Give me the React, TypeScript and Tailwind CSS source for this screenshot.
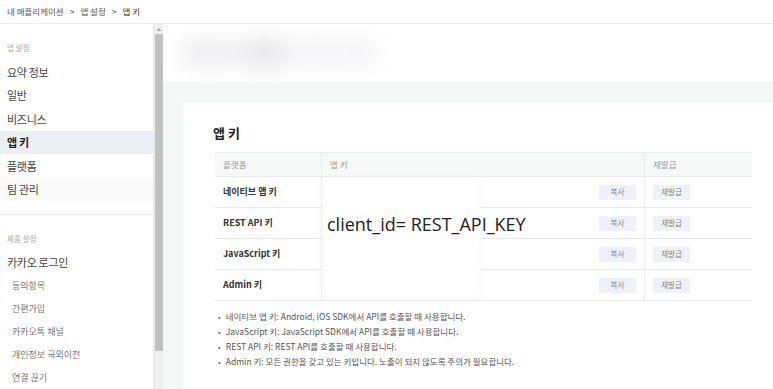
import React from "react";

const font = { fontFamily: '"Noto Sans CJK KR", "Noto Sans", sans-serif' };

function SideItem({ label, active, hover }: { label: string; active?: boolean; hover?: boolean }) {
  return (
    <div
      className={`h-[23.5px] flex items-center pl-[7px] text-[11px] tracking-[-0.3px] ${
        active ? "bg-[#eceef5] font-bold text-[#222]" : hover ? "bg-[#fafafa] text-[#444]" : "text-[#444]"
      }`}
    >
      {label}
    </div>
  );
}

function SubItem({ label }: { label: string }) {
  return <div className="h-[23px] flex items-center pl-[12px] text-[9px] text-[#777]">{label}</div>;
}

function Btn({ label }: { label: string }) {
  return (
    <div className="w-[37px] h-[15px] bg-[#f0f1f6] text-[#888] text-[7.5px] flex items-center justify-center">
      {label}
    </div>
  );
}

const rows = ["네이티브 앱 키", "REST API 키", "JavaScript 키", "Admin 키"];

const notes = [
  "네이티브 앱 키: Android, iOS SDK에서 API를 호출할 때 사용합니다.",
  "JavaScript 키: JavaScript SDK에서 API를 호출할 때 사용합니다.",
  "REST API 키: REST API를 호출할 때 사용합니다.",
  "Admin 키: 모든 권한을 갖고 있는 키입니다. 노출이 되지 않도록 주의가 필요합니다.",
];

export default function App() {
  return (
    <div className="w-[773px] h-[389px] overflow-hidden flex flex-col bg-white" style={font}>
      <div className="h-[24px] shrink-0 border-b border-[#ececec] flex items-center pl-[7px] text-[8.5px] text-[#555] gap-[6px]">
        <span>내 애플리케이션</span>
        <span>&gt;</span>
        <span>앱 설정</span>
        <span>&gt;</span>
        <span className="text-[#333]">앱 키</span>
      </div>
      <div className="flex flex-1 min-h-0">
        <div className="w-[153px] shrink-0 flex flex-col">
          <div className="h-[36px] pt-[12px] flex items-center pl-[7px] text-[7.5px] text-[#aaa]">앱 설정</div>
          <SideItem label="요약 정보" />
          <SideItem label="일반" />
          <SideItem label="비즈니스" />
          <SideItem label="앱 키" active />
          <SideItem label="플랫폼" />
          <SideItem label="팀 관리" hover />
          <div className="mt-[13px] border-t border-[#ececec]" />
          <div className="h-[36px] pt-[12px] flex items-center pl-[7px] text-[7.5px] text-[#aaa]">제품 설정</div>
          <div className="h-[23px] flex items-center pl-[7px] text-[11px] tracking-[-0.3px] text-[#444]">카카오 로그인</div>
          <SubItem label="동의항목" />
          <SubItem label="간편가입" />
          <SubItem label="카카오톡 채널" />
          <SubItem label="개인정보 국외이전" />
          <SubItem label="연결 끊기" />
        </div>
        <div className="w-[10px] shrink-0 bg-[#efefef] border-l border-[#e6e6e6] flex flex-col items-center">
          <div className="h-[10px] flex items-center justify-center">
            <div className="w-0 h-0 border-l-[2.5px] border-r-[2.5px] border-b-[3px] border-l-transparent border-r-transparent border-b-[#a3a3a3]" />
          </div>
          <div className="w-[8px] h-[317px] bg-[#c1c1c1]" />
        </div>
        <div className="flex-1 flex flex-col min-w-0">
          <div className="h-[58px] shrink-0 bg-white relative overflow-hidden">
            <div className="absolute left-[8px] top-[4px] w-[214px] h-[50px] blur-[10px] flex items-center">
              <div className="w-[60px] h-[30px] rounded-full bg-[#f0f0f2] ml-[8px]" />
              <div className="w-[50px] h-[34px] rounded-full bg-[#eaeaec]" />
              <div className="w-[90px] h-[28px] rounded-full bg-[#f4f4f6]" />
            </div>
          </div>
          <div className="flex-1 bg-[#f5f6f6] pt-[21px] pl-[20px]">
            <div className="bg-white h-full pl-[32px] pt-[21px]">
              <div className="text-[13px] font-bold text-[#222] h-[18px] flex items-center -ml-[2px]">앱 키</div>
              <div className="mt-[10px] w-[537px] relative">
                <div className="flex h-[25px] bg-[#f7f8f8] border-t border-[#ececec] border-b border-[#e8e8e8] text-[8.5px] text-[#999]">
                  <div className="w-[107px] pl-[8px] flex items-center border-r border-[#ececec]">플랫폼</div>
                  <div className="w-[323px] pl-[8px] flex items-center border-r border-[#ececec]">앱 키</div>
                  <div className="flex-1 pl-[8px] flex items-center">재발급</div>
                </div>
                {rows.map((r) => (
                  <div key={r} className="flex h-[31px] border-b border-[#e8e8e8]">
                    <div className="w-[107px] pl-[8px] flex items-center border-r border-[#ececec] text-[9px] font-bold text-[#333]">
                      {r}
                    </div>
                    <div className="w-[323px] pr-[8px] flex items-center justify-end border-r border-[#ececec]">
                      <Btn label="복사" />
                    </div>
                    <div className="flex-1 pl-[8px] flex items-center">
                      <Btn label="재발급" />
                    </div>
                  </div>
                ))}
                <div className="absolute left-[108px] top-[28px] w-[157px] h-[117px] bg-white shadow-[0_0_8px_2px_rgba(0,0,0,0.035)] blur-[2px]" />
                <div
                  className="absolute left-[112px] top-[63px] text-[18px] text-[#222] leading-none"
                  style={{ fontFamily: '"Open Sans", "Liberation Sans", sans-serif' }}
                >
                  client_id= REST_API_KEY
                </div>
              </div>
              <ul className="mt-[8px] flex flex-col text-[8.5px] text-[#555]">
                {notes.map((n) => (
                  <li key={n} className="h-[15px] flex items-center gap-[5px] pl-[3px]">
                    <span className="text-[#777] text-[8px]">•</span>
                    <span>{n}</span>
                  </li>
                ))}
              </ul>
            </div>
          </div>
        </div>
      </div>
    </div>
  );
}
